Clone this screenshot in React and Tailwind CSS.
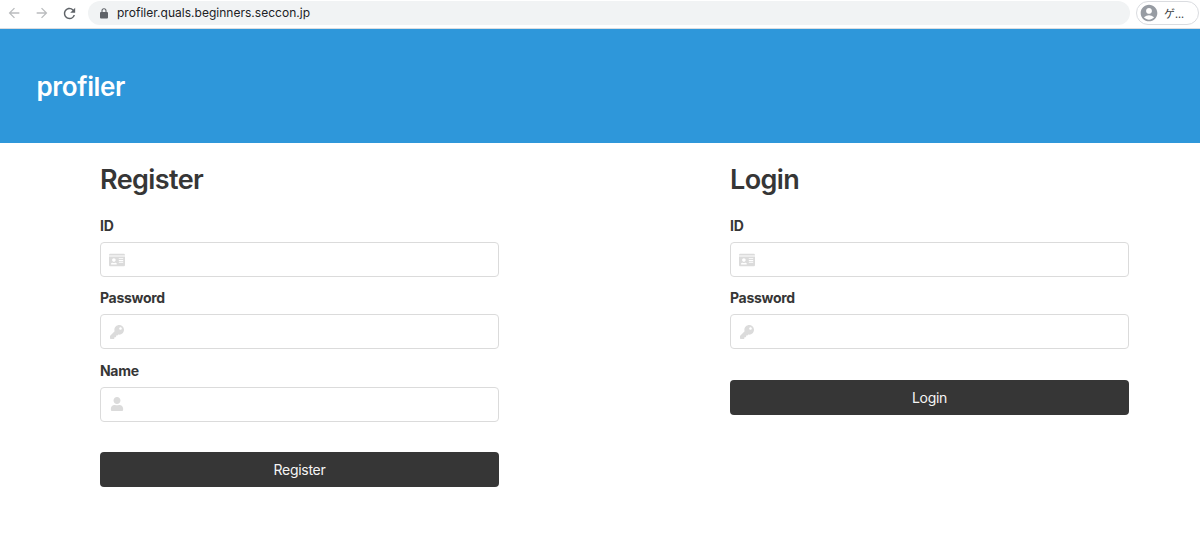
import { FaIdCard, FaKey, FaUser } from "react-icons/fa";
import { MdArrowBack, MdArrowForward, MdRefresh, MdAccountCircle } from "react-icons/md";

function LockIcon() {
  return (
    <svg width="8" height="11" viewBox="0 0 8 11" className="mr-[9px] ml-[2px] text-[#5f6368]">
      <rect x="0" y="4" width="8" height="6.5" rx="1" fill="currentColor" />
      <path d="M2 4.5V2.8a2 2 0 0 1 4 0v1.7" fill="none" stroke="currentColor" strokeWidth="1.1" />
    </svg>
  );
}

function Field({ label, Icon, size }) {
  return (
    <div className="h-[72.3px]">
      <label className="block text-[14px] leading-[21px] font-bold tracking-[-0.3px] text-[#363636]">{label}</label>
      <div className="mt-[6px] flex h-[35px] items-center rounded-[4px] border border-[#dbdbdb] bg-white">
        <span className="flex w-[32px] justify-center text-[#dbdbdb]">
          <Icon size={size} />
        </span>
      </div>
    </div>
  );
}

const FIELDS = {
  ID: [FaIdCard, 16],
  Password: [FaKey, 14],
  Name: [FaUser, 14],
};

function Form({ title, names }) {
  return (
    <section className="w-[399px]">
      <h1 className="text-[27px] leading-[32px] font-semibold tracking-[-0.6px] text-[#363636]">{title}</h1>
      <div className="mt-[19px]">
        {names.map((n) => (
          <Field key={n} label={n} Icon={FIELDS[n][0]} size={FIELDS[n][1]} />
        ))}
      </div>
      <button className="mt-[20px] block h-[35px] w-full rounded-[4px] bg-[#363636] text-[14px] tracking-[-0.28px] text-[#f5f5f5]">
        {title}
      </button>
    </section>
  );
}

export default function App() {
  return (
    <div className="h-[533px] overflow-hidden bg-white font-['Inter',sans-serif]">
      <div className="flex h-[29px] items-start border-b border-[#dadce0] bg-white pl-[6px]">
        <div className="flex h-[26px] w-[82px] items-center gap-[12px] text-[#babcbe]">
          <MdArrowBack size={16} />
          <MdArrowForward size={16} />
          <MdRefresh size={17} className="-ml-px text-[#5f6368]" />
        </div>
        <div className="mt-px flex h-[24px] w-[1042px] items-center rounded-full bg-[#f1f3f4] pl-[10px] text-[12px] tracking-[0.02px] text-[#202124]">
          <LockIcon />
          profiler.quals.beginners.seccon.jp
        </div>
        <div className="mt-px ml-[6px] flex h-[24px] w-[63px] items-center rounded-full border border-[#dadce0] pl-[2px] font-['Noto_Sans_CJK_JP',sans-serif] text-[11px] text-[#3c4043]">
          <MdAccountCircle size={20} className="mr-[5px] text-[#979ca3]" />
          ゲ...
        </div>
      </div>
      <header className="flex h-[113.5px] items-center bg-[#2e97da] pt-[2px] pl-[36.5px] text-[26px] font-semibold tracking-[-0.35px] text-white">
        profiler
      </header>
      <main className="flex gap-[231px] pt-[21.5px] pl-[100px]">
        <Form title="Register" names={["ID", "Password", "Name"]} />
        <Form title="Login" names={["ID", "Password"]} />
      </main>
    </div>
  );
}
